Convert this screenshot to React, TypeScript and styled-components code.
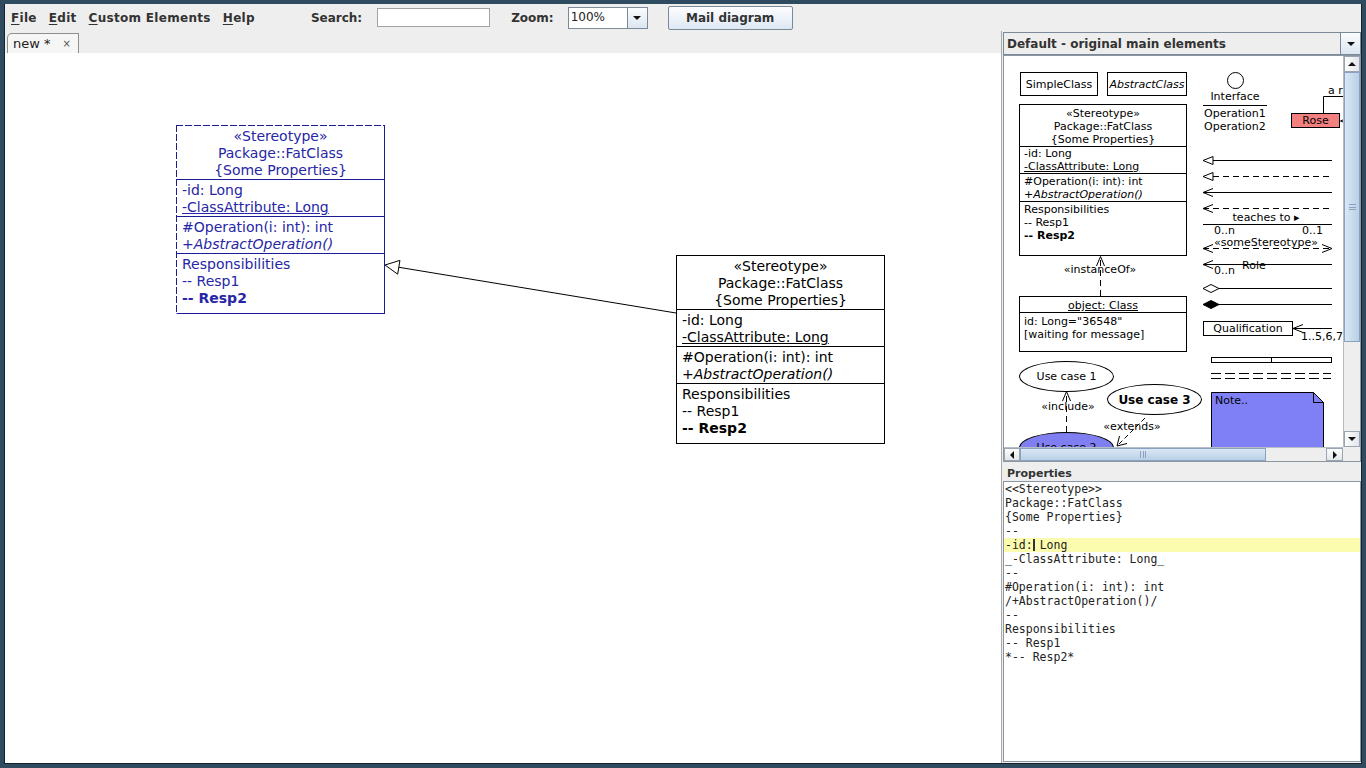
import React from "react";
import styled, { createGlobalStyle } from "styled-components";

const GlobalStyle = createGlobalStyle`
  html, body, #root { margin: 0; padding: 0; }
  body { width: 1366px; height: 768px; overflow: hidden; font-family: "DejaVu Sans", "Liberation Sans", sans-serif; }
  *, *::before, *::after { box-sizing: border-box; }
`;

const Frame = styled.div`
  width: 1366px;
  height: 768px;
  background: #2f4b5f;
  padding: 4px;
  display: flex;
`;

const Window = styled.div`
  flex: 1;
  display: flex;
  flex-direction: column;
  background: #eeeeee;
  border: 1px solid #16222b;
  border-top: none;
  min-width: 0;
  min-height: 0;
`;

/* ---------- menu / toolbar ---------- */
const MenuBar = styled.div`
  height: 27px;
  flex: none;
  display: flex;
  align-items: center;
  font: bold 12px "DejaVu Sans", sans-serif;
  color: #333333;
`;

const MenuItem = styled.span`
  padding: 0 6px;
  letter-spacing: 0.3px;
  white-space: nowrap;
  & u { text-decoration: underline; text-underline-offset: 2px; }
`;

const ToolLabel = styled.span<{ $ml: number }>`
  margin-left: ${(p) => p.$ml}px;
  white-space: nowrap;
`;

const SearchInput = styled.div<{ $ml: number }>`
  margin-left: ${(p) => p.$ml}px;
  width: 113px;
  height: 19px;
  background: #ffffff;
  border: 1px solid #a2a2a2;
`;

const ZoomCombo = styled.div<{ $ml: number }>`
  margin-left: ${(p) => p.$ml}px;
  width: 80px;
  height: 22px;
  display: flex;
  border: 1px solid #7a8a99;
  background: #ffffff;
`;

const ZoomText = styled.div`
  flex: 1;
  font: 12px "DejaVu Sans", sans-serif;
  color: #222;
  padding: 2px 0 0 2px;
`;

const ArrowBtn = styled.div<{ $w: number }>`
  width: ${(p) => p.$w}px;
  display: flex;
  align-items: center;
  justify-content: center;
  border-left: 1px solid #7a8a99;
  background: linear-gradient(#fbfcfd, #dce6f1);
`;

const MailButton = styled.div<{ $ml: number }>`
  margin-left: ${(p) => p.$ml}px;
  width: 125px;
  height: 24px;
  display: flex;
  align-items: center;
  justify-content: center;
  border: 1px solid #7a8a99;
  border-radius: 2px;
  background: linear-gradient(#fdfdfe, #dde8f3);
  color: #333;
`;

/* ---------- body ---------- */
const Body = styled.div`
  flex: 1;
  display: flex;
  min-height: 0;
`;

const LeftPane = styled.div`
  width: 996px;
  flex: none;
  display: flex;
  flex-direction: column;
`;

const TabStrip = styled.div`
  height: 22px;
  flex: none;
  display: flex;
  align-items: flex-end;
  padding-left: 2px;
`;

const Tab = styled.div`
  width: 72px;
  height: 20px;
  display: flex;
  align-items: center;
  padding-left: 5px;
  background: #f6f6f6;
  border: 1px solid #8e8e8e;
  border-bottom: none;
  border-top-left-radius: 5px;
  font: 13px "DejaVu Sans", sans-serif;
  color: #222;
`;

const TabClose = styled.span`
  margin-left: 12px;
  font-size: 10px;
  color: #555;
`;

const Canvas = styled.div`
  flex: 1;
  position: relative;
  overflow: hidden;
  background: #ffffff;
`;

const Divider = styled.div`
  width: 2px;
  flex: none;
  background: #eeeeee;
  border-left: 1px solid #a9a9a9;
`;

const RightPane = styled.div`
  flex: 1;
  display: flex;
  flex-direction: column;
  padding: 1px 0 1px 0;
  min-width: 0;
`;

const PaletteCombo = styled.div`
  height: 23px;
  flex: none;
  display: flex;
  border: 1px solid #7a8a99;
  background: #eeeeee;
  font: bold 12px "DejaVu Sans", sans-serif;
  color: #333;
`;

const ComboText = styled.div`
  flex: 1;
  display: flex;
  align-items: center;
  padding-left: 3px;
  white-space: nowrap;
`;

const PaletteScroll = styled.div`
  height: 407px;
  flex: none;
  display: grid;
  grid-template-columns: 339px 17px;
  grid-template-rows: 391px 14px;
  border: 1px solid #8a96a2;
  background: #eeeeee;
`;

const PaletteView = styled.div`
  position: relative;
  overflow: hidden;
  background: #ffffff;
  font: 11px "DejaVu Sans", sans-serif;
  color: #000;
`;

const VScroll = styled.div`
  display: flex;
  flex-direction: column;
  background: #eeeeee;
  border-left: 1px solid #b5bec7;
`;

const HScroll = styled.div`
  display: flex;
  background: #eeeeee;
  border-top: 1px solid #b5bec7;
`;

const Corner = styled.div`
  background: #eeeeee;
`;

const ScrollBtn = styled.div<{ $len: number; $vertical: boolean }>`
  flex: none;
  ${(p) => (p.$vertical ? `height: ${p.$len}px;` : `width: ${p.$len}px;`)}
  display: flex;
  align-items: center;
  justify-content: center;
  background: linear-gradient(${(p) => (p.$vertical ? "to right" : "to bottom")}, #fdfdfd, #e2e6eb);
  border: 1px solid #9aa5b1;
`;

const Track = styled.div<{ $vertical: boolean }>`
  flex: 1;
  display: flex;
  flex-direction: ${(p) => (p.$vertical ? "column" : "row")};
`;

const Thumb = styled.div<{ $len: number; $vertical: boolean }>`
  flex: none;
  ${(p) => (p.$vertical ? `height: ${p.$len}px;` : `width: ${p.$len}px;`)}
  display: flex;
  align-items: center;
  justify-content: center;
  background: linear-gradient(${(p) => (p.$vertical ? "to right" : "to bottom")}, #dae7f4, #b9d0e6);
  border: 1px solid #8aa2bf;
`;

const Grip = styled.div<{ $vertical: boolean }>`
  ${(p) =>
    p.$vertical
      ? `width: 7px; height: 6px; border-top: 1px solid #8aa2bf; border-bottom: 1px solid #8aa2bf; background: linear-gradient(transparent 2px, #8aa2bf 2px, #8aa2bf 3px, transparent 3px);`
      : `width: 6px; height: 7px; border-left: 1px solid #8aa2bf; border-right: 1px solid #8aa2bf; background: linear-gradient(to right, transparent 2px, #8aa2bf 2px, #8aa2bf 3px, transparent 3px);`}
`;

const PropsLabel = styled.div`
  height: 19px;
  flex: none;
  display: flex;
  align-items: center;
  padding: 4px 0 0 4px;
  font: bold 11px "DejaVu Sans", sans-serif;
  color: #333;
`;

const PropsText = styled.div`
  flex: 1;
  background: #ffffff;
  border: 1px solid #8a96a2;
  padding-left: 1px;
  font: 11.5px "DejaVu Sans Mono", "Liberation Mono", monospace;
  color: #222;
`;

const PropsLine = styled.div<{ $hl?: boolean }>`
  height: 14px;
  line-height: 14px;
  white-space: pre;
  margin-left: -1px;
  padding-left: 1px;
  background: ${(p) => (p.$hl ? "#fcfcae" : "transparent")};
`;

const Caret = styled.span`
  display: inline-block;
  width: 2px;
  height: 12px;
  margin-right: -2px;
  vertical-align: -2px;
  background: #333;
`;

/* ---------- UML classes on main canvas ---------- */
const SEL = "#1c1c96";

const ClassBox = styled.div<{ $x: number; $y: number; $selected?: boolean }>`
  position: absolute;
  left: ${(p) => p.$x}px;
  top: ${(p) => p.$y}px;
  width: 209px;
  height: 189px;
  display: flex;
  flex-direction: column;
  background: #ffffff;
  font: 14px "DejaVu Sans", sans-serif;
  line-height: 17px;
  color: ${(p) => (p.$selected ? "#2626a6" : "#000")};
  border: 1px solid ${(p) => (p.$selected ? SEL : "#000")};
  ${(p) =>
    p.$selected
      ? `
    border-top-color: transparent;
    border-left-color: transparent;
    &::before {
      content: "";
      position: absolute;
      left: -1px; right: -1px; top: -1px; height: 1px;
      background: repeating-linear-gradient(to right, ${SEL} 0 7px, transparent 7px 9px);
    }
    &::after {
      content: "";
      position: absolute;
      left: -1px; top: -1px; bottom: -1px; width: 1px;
      background: repeating-linear-gradient(to bottom, ${SEL} 0 7px, transparent 7px 9px);
    }
  `
      : ""}
`;

const ClassHead = styled.div<{ $c: string }>`
  padding-top: 2px;
  text-align: center;
  border-bottom: 1px solid ${(p) => p.$c};
`;

const ClassSection = styled.div<{ $c: string; $last?: boolean }>`
  padding: 2px 0 0 5px;
  ${(p) => (p.$last ? "flex: 1;" : `border-bottom: 1px solid ${p.$c};`)}
`;

const Line = styled.div``;
const Under = styled.div`
  text-decoration: underline;
`;
const Ital = styled.div`
  font-style: italic;
`;
const Bold = styled.div`
  font-weight: bold;
`;

const Overlay = styled.svg`
  position: absolute;
  left: 0;
  top: 0;
  pointer-events: none;
`;

/* ---------- palette nodes ---------- */
const PBox = styled.div<{ $x: number; $y: number; $w: number; $h: number; $bg?: string }>`
  position: absolute;
  left: ${(p) => p.$x}px;
  top: ${(p) => p.$y}px;
  width: ${(p) => p.$w}px;
  height: ${(p) => p.$h}px;
  border: 1px solid #000;
  background: ${(p) => p.$bg || "#ffffff"};
  line-height: 13px;
`;

const PCenter = styled.div<{ $italic?: boolean }>`
  height: 100%;
  display: flex;
  align-items: center;
  justify-content: center;
  font-style: ${(p) => (p.$italic ? "italic" : "normal")};
  white-space: nowrap;
`;

const PBoxCol = styled(PBox)`
  display: flex;
  flex-direction: column;
`;

const PSection = styled.div<{ $pt: number; $center?: boolean; $last?: boolean }>`
  padding: ${(p) => p.$pt}px 0 0 ${(p) => (p.$center ? 0 : 4)}px;
  text-align: ${(p) => (p.$center ? "center" : "left")};
  ${(p) => (p.$last ? "flex: 1;" : "border-bottom: 1px solid #000;")}
  white-space: nowrap;
`;

const Ellipse = styled.div<{ $x: number; $y: number; $bg?: string; $bold?: boolean }>`
  position: absolute;
  left: ${(p) => p.$x}px;
  top: ${(p) => p.$y}px;
  width: 95px;
  height: 31px;
  border: 1px solid #000;
  border-radius: 50%;
  background: ${(p) => p.$bg || "#ffffff"};
  display: flex;
  align-items: center;
  justify-content: center;
  font-weight: ${(p) => (p.$bold ? "bold" : "normal")};
  font-size: ${(p) => (p.$bold ? "12px" : "11px")};
  white-space: nowrap;
`;

const PLabel = styled.div<{ $x: number; $y: number; $center?: boolean }>`
  position: absolute;
  left: ${(p) => p.$x}px;
  top: ${(p) => p.$y}px;
  line-height: 13px;
  white-space: nowrap;
  ${(p) => (p.$center ? "transform: translateX(-50%);" : "")}
`;

/* ---------- small icons ---------- */
const Tri = ({ dir }: { dir: "up" | "down" | "left" | "right" }) => {
  const pts: Record<string, string> = {
    down: "0,0 8,0 4,4",
    up: "0,4 8,4 4,0",
    left: "4,0 4,8 0,4",
    right: "0,0 0,8 4,4",
  };
  const vertical = dir === "up" || dir === "down";
  return (
    <svg width={vertical ? 8 : 4} height={vertical ? 4 : 8}>
      <polygon points={pts[dir]} fill="#111" />
    </svg>
  );
};

const classLines = (color: string) => (
  <>
    <ClassHead $c={color}>
      <Line>«Stereotype»</Line>
      <Line>Package::FatClass</Line>
      <Line>{"{Some Properties}"}</Line>
    </ClassHead>
    <ClassSection $c={color}>
      <Line>-id: Long</Line>
      <Under>-ClassAttribute: Long</Under>
    </ClassSection>
    <ClassSection $c={color}>
      <Line>#Operation(i: int): int</Line>
      <Ital>+AbstractOperation()</Ital>
    </ClassSection>
    <ClassSection $c={color} $last>
      <Line>Responsibilities</Line>
      <Line>-- Resp1</Line>
      <Bold>-- Resp2</Bold>
    </ClassSection>
  </>
);

const propLines = [
  "<<Stereotype>>",
  "Package::FatClass",
  "{Some Properties}",
  "--",
  "CARET",
  "_-ClassAttribute: Long_",
  "--",
  "#Operation(i: int): int",
  "/+AbstractOperation()/",
  "--",
  "Responsibilities",
  "-- Resp1",
  "*-- Resp2*",
];

const PaletteDrawing = () => {
  const dash = "6 4";
  return (
    <Overlay width={339} height={430} stroke="#000" fill="none" strokeWidth={1}>
      {/* interface */}
      <circle cx={231.5} cy={24.5} r={8} />
      <line x1={199} y1={49.5} x2={263} y2={49.5} />
      {/* rose relation */}
      <polyline points="319.5,57 319.5,40.5 345,40.5" />
      <polyline points="346,61 336.5,65 346,69" />
      {/* generalization */}
      <line x1={209} y1={104.5} x2={328} y2={104.5} />
      <polygon points="199,104.5 209,100.5 209,108.5" />
      {/* realization */}
      <line x1={209} y1={120.5} x2={328} y2={120.5} strokeDasharray={dash} />
      <polygon points="199,120.5 209,116.5 209,124.5" />
      {/* association */}
      <line x1={199} y1={136.5} x2={328} y2={136.5} />
      <polyline points="209,132.5 199,136.5 209,140.5" />
      {/* dependency */}
      <line x1={199} y1={152.5} x2={328} y2={152.5} strokeDasharray={dash} />
      <polyline points="209,148.5 199,152.5 209,156.5" />
      {/* teaches to */}
      <line x1={199} y1={168.5} x2={328} y2={168.5} />
      {/* stereotype */}
      <line x1={199} y1={192.5} x2={328} y2={192.5} strokeDasharray={dash} />
      <polyline points="209,188.5 199,192.5 209,196.5" />
      <polyline points="318,188.5 328,192.5 318,196.5" />
      {/* role */}
      <line x1={199} y1={208.5} x2={328} y2={208.5} />
      <polyline points="209,204.5 199,208.5 209,212.5" />
      {/* aggregation */}
      <polygon points="199,232.5 207,228.5 215,232.5 207,236.5" fill="#fff" />
      <line x1={215} y1={232.5} x2={328} y2={232.5} />
      {/* composition */}
      <polygon points="199,248.5 207,244.5 215,248.5 207,252.5" fill="#000" />
      <line x1={215} y1={248.5} x2={328} y2={248.5} />
      {/* qualification */}
      <line x1={289} y1={272.5} x2={328} y2={272.5} />
      <polyline points="299,268.5 289,272.5 299,276.5" />
      {/* lifeline boxes */}
      <rect x={207.5} y={301.5} width={120} height={5} />
      <line x1={267.5} y1={301.5} x2={267.5} y2={306.5} />
      <line x1={207} y1={317.5} x2={327} y2={317.5} strokeDasharray="10 4" />
      <line x1={207} y1={322.5} x2={327} y2={322.5} strokeDasharray="10 4" />
      {/* instanceOf */}
      <line x1={96.5} y1={240} x2={96.5} y2={201} strokeDasharray={dash} />
      <polyline points="92.5,210 96.5,200.5 100.5,210" />
      {/* include */}
      <line x1={62.5} y1={376} x2={62.5} y2={336} strokeDasharray={dash} />
      <polyline points="58.5,345 62.5,335.5 66.5,345" />
      {/* extends */}
      <line x1={141} y1={362} x2={114} y2={389} strokeDasharray="5 3" />
      <polyline points="115.5,380 113,390 123,387.5" />
      {/* note */}
      <polygon points="207.5,336.5 309.5,336.5 319.5,346.5 319.5,430 207.5,430" fill="#8080f6" />
      <polyline points="309.5,336.5 309.5,346.5 319.5,346.5" />
    </Overlay>
  );
};

export default function App() {
  // arrow geometry on the main canvas
  const tip = { x: 380, y: 212 };
  const start = { x: 671, y: 260 };
  const dx = start.x - tip.x;
  const dy = start.y - tip.y;
  const len = Math.hypot(dx, dy);
  const ux = dx / len;
  const uy = dy / len;
  const bx = tip.x + 14 * ux;
  const by = tip.y + 14 * uy;
  const c1 = `${bx - 7 * uy},${by + 7 * ux}`;
  const c2 = `${bx + 7 * uy},${by - 7 * ux}`;

  return (
    <>
      <GlobalStyle />
      <Frame>
        <Window>
          <MenuBar>
            <MenuItem>
              <u>F</u>ile
            </MenuItem>
            <MenuItem>
              <u>E</u>dit
            </MenuItem>
            <MenuItem>
              <u>C</u>ustom Elements
            </MenuItem>
            <MenuItem>
              <u>H</u>elp
            </MenuItem>
            <ToolLabel $ml={50}>Search:</ToolLabel>
            <SearchInput $ml={15} />
            <ToolLabel $ml={21}>Zoom:</ToolLabel>
            <ZoomCombo $ml={14}>
              <ZoomText>100%</ZoomText>
              <ArrowBtn $w={20}>
                <Tri dir="down" />
              </ArrowBtn>
            </ZoomCombo>
            <MailButton $ml={20}>Mail diagram</MailButton>
          </MenuBar>
          <Body>
            <LeftPane>
              <TabStrip>
                <Tab>
                  new *<TabClose>×</TabClose>
                </Tab>
              </TabStrip>
              <Canvas>
                <Overlay width={996} height={710}>
                  <line x1={bx} y1={by} x2={start.x} y2={start.y} stroke="#000" strokeWidth={1} />
                  <polygon points={`${tip.x},${tip.y} ${c1} ${c2}`} fill="#fff" stroke="#000" strokeWidth={1} />
                </Overlay>
                <ClassBox $x={171} $y={72} $selected>
                  {classLines(SEL)}
                </ClassBox>
                <ClassBox $x={671} $y={202}>
                  {classLines("#000")}
                </ClassBox>
              </Canvas>
            </LeftPane>
            <Divider />
            <RightPane>
              <PaletteCombo>
                <ComboText>Default - original main elements</ComboText>
                <ArrowBtn $w={20}>
                  <Tri dir="down" />
                </ArrowBtn>
              </PaletteCombo>
              <PaletteScroll>
                <PaletteView>
                  <PaletteDrawing />
                  <PBox $x={16} $y={16} $w={78} $h={24}>
                    <PCenter>SimpleClass</PCenter>
                  </PBox>
                  <PBox $x={103} $y={16} $w={80} $h={24}>
                    <PCenter $italic>AbstractClass</PCenter>
                  </PBox>
                  <PLabel $x={231} $y={34} $center>
                    Interface
                  </PLabel>
                  <PLabel $x={200} $y={51}>
                    Operation1
                  </PLabel>
                  <PLabel $x={200} $y={64}>
                    Operation2
                  </PLabel>
                  <PLabel $x={324} $y={28}>
                    a r
                  </PLabel>
                  <PBox $x={287} $y={57} $w={49} $h={15} $bg="#f28080">
                    <PCenter>Rose</PCenter>
                  </PBox>

                  <PBoxCol $x={15} $y={48} $w={168} $h={152}>
                    <PSection $pt={2} $center>
                      <div>«Stereotype»</div>
                      <div>Package::FatClass</div>
                      <div>{"{Some Properties}"}</div>
                    </PSection>
                    <PSection $pt={0}>
                      <div>-id: Long</div>
                      <Under>-ClassAttribute: Long</Under>
                    </PSection>
                    <PSection $pt={1}>
                      <div>#Operation(i: int): int</div>
                      <Ital>+AbstractOperation()</Ital>
                    </PSection>
                    <PSection $pt={1} $last>
                      <div>Responsibilities</div>
                      <div>-- Resp1</div>
                      <Bold>-- Resp2</Bold>
                    </PSection>
                  </PBoxCol>
                  <PLabel $x={96} $y={207} $center>
                    «instanceOf»
                  </PLabel>
                  <PBoxCol $x={15} $y={240} $w={168} $h={56}>
                    <PSection $pt={2} $center>
                      <Under>object: Class</Under>
                    </PSection>
                    <PSection $pt={2} $last>
                      <div>id: Long="36548"</div>
                      <div>[waiting for message]</div>
                    </PSection>
                  </PBoxCol>

                  <PLabel $x={262} $y={155} $center>
                    teaches to ▸
                  </PLabel>
                  <PLabel $x={210} $y={168}>
                    0..n
                  </PLabel>
                  <PLabel $x={298} $y={168}>
                    0..1
                  </PLabel>
                  <PLabel $x={262} $y={180} $center>
                    «someStereotype»
                  </PLabel>
                  <PLabel $x={210} $y={208}>
                    0..n
                  </PLabel>
                  <PLabel $x={238} $y={203}>
                    Role
                  </PLabel>
                  <PBox $x={199} $y={265} $w={90} $h={15}>
                    <PCenter>Qualification</PCenter>
                  </PBox>
                  <PLabel $x={297} $y={274}>
                    1..5,6,7
                  </PLabel>

                  <Ellipse $x={15} $y={305}>Use case 1</Ellipse>
                  <PLabel $x={64} $y={344} $center>
                    «include»
                  </PLabel>
                  <Ellipse $x={103} $y={328} $bold>
                    Use case 3
                  </Ellipse>
                  <PLabel $x={128} $y={364} $center>
                    «extends»
                  </PLabel>
                  <Ellipse $x={15} $y={376} $bg="#7f7ff2">
                    Use case 2
                  </Ellipse>
                  <PLabel $x={211} $y={338}>
                    Note..
                  </PLabel>
                </PaletteView>
                <VScroll>
                  <ScrollBtn $len={16} $vertical>
                    <Tri dir="up" />
                  </ScrollBtn>
                  <Track $vertical>
                    <Thumb $len={270} $vertical>
                      <Grip $vertical />
                    </Thumb>
                  </Track>
                  <ScrollBtn $len={16} $vertical>
                    <Tri dir="down" />
                  </ScrollBtn>
                </VScroll>
                <HScroll>
                  <ScrollBtn $len={16} $vertical={false}>
                    <Tri dir="left" />
                  </ScrollBtn>
                  <Track $vertical={false}>
                    <Thumb $len={246} $vertical={false}>
                      <Grip $vertical={false} />
                    </Thumb>
                  </Track>
                  <ScrollBtn $len={17} $vertical={false}>
                    <Tri dir="right" />
                  </ScrollBtn>
                </HScroll>
                <Corner />
              </PaletteScroll>
              <PropsLabel>Properties</PropsLabel>
              <PropsText>
                {propLines.map((l, i) =>
                  l === "CARET" ? (
                    <PropsLine key={i} $hl>
                      -id:<Caret /> Long
                    </PropsLine>
                  ) : (
                    <PropsLine key={i}>{l}</PropsLine>
                  )
                )}
              </PropsText>
            </RightPane>
          </Body>
        </Window>
      </Frame>
    </>
  );
}
